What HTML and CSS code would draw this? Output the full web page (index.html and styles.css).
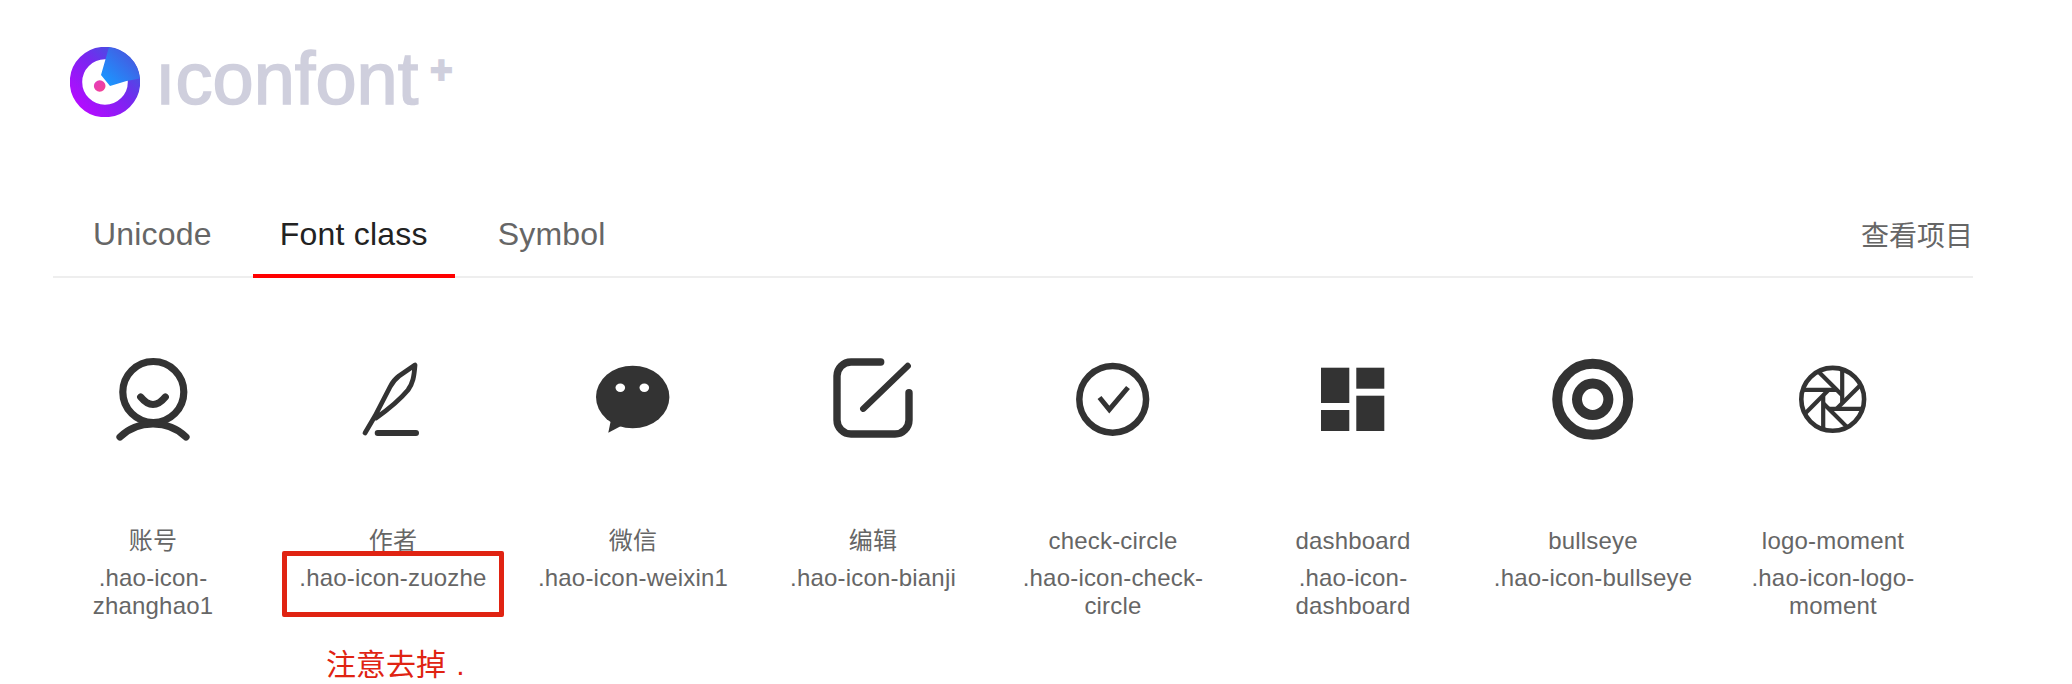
FILE: index.html
```html
<!DOCTYPE html>
<html>
<head>
    <title>iconfont Demo</title>
    <meta charset="utf-8">
    <link rel="stylesheet" href="styles.css">
</head>
<body>

<div class="main">
    <!-- Logo -->
    <h1 class="logo">
        <svg class="logo-mark" viewBox="0 0 70 70">
            <defs>
                <linearGradient id="ringFill" x1="0.1" y1="0.95" x2="0.95" y2="0.1">
                    <stop offset="0" stop-color="#b30cff"/>
                    <stop offset="0.55" stop-color="#7a26f0"/>
                    <stop offset="1" stop-color="#3c58e0"/>
                </linearGradient>
                <linearGradient id="wedgeFill" x1="0.1" y1="0.9" x2="0.9" y2="0.1">
                    <stop offset="0" stop-color="#1b96ff"/>
                    <stop offset="1" stop-color="#4c50dc"/>
                </linearGradient>
                <linearGradient id="dotFill" x1="0" y1="0" x2="1" y2="1">
                    <stop offset="0" stop-color="#e23cc0"/>
                    <stop offset="1" stop-color="#f54390"/>
                </linearGradient>
                <clipPath id="ringClip"><circle cx="35" cy="35" r="35"/></clipPath>
            </defs>
            <circle cx="35" cy="35" r="29" fill="none" stroke="url(#ringFill)" stroke-width="12.4"/>
            <polygon points="31,28 39,0 72,0 72,31 56.5,34 40,39" fill="url(#wedgeFill)" clip-path="url(#ringClip)"/>
            <circle cx="29.7" cy="39" r="5.8" fill="url(#dotFill)"/>
        </svg>
        <span class="logo-text">ıconfont</span><span class="logo-plus">+</span>
    </h1>

    <!-- Tabs -->
    <div class="nav">
        <ul class="tabs">
            <li class="tab">Unicode</li>
            <li class="tab active">Font class</li>
            <li class="tab">Symbol</li>
        </ul>
        <a class="more" href="#">查看项目</a>
    </div>

    <!-- Icon list -->
    <ul class="icon-list">
        <li class="icon-item">
            <svg class="icon" viewBox="0 0 100 100">
                <g class="line" stroke-width="7.2">
                    <circle cx="50.3" cy="43" r="30.5"/>
                    <path d="M37.7 48Q50 63 62.3 48"/>
                    <path d="M17 88C27 78 38 75 50 75C62 75 73 78 83 88"/>
                </g>
            </svg>
            <div class="name">账号</div>
            <div class="code">.hao-icon-zhanghao1</div>
        </li>
        <li class="icon-item">
            <svg class="icon" viewBox="0 0 100 100">
                <g class="line" stroke-width="4.8">
                    <path d="M22 84L32 67L47 38C50 32 52 30 56 27L72 16C71 28 70 34 65 41C60 47 50 57 33 69"/>
                </g>
                <path class="line" stroke-width="6" d="M34.7 84H73"/>
            </svg>
            <div class="name">作者</div>
            <div class="code">.hao-icon-zuozhe</div>
        </li>
        <li class="icon-item">
            <svg class="icon" viewBox="0 0 100 100">
                <ellipse class="solid" cx="49.7" cy="48" rx="36.7" ry="31.3"/>
                <polygon class="solid" points="27.7,72 25.3,83.7 38,77"/>
                <ellipse class="hole" cx="37.3" cy="38.7" rx="4.8" ry="4.2"/>
                <ellipse class="hole" cx="61.3" cy="38.7" rx="4.8" ry="4.2"/>
            </svg>
            <div class="name">微信</div>
            <div class="code">.hao-icon-weixin1</div>
        </li>
        <li class="icon-item">
            <svg class="icon" viewBox="0 0 100 100">
                <g class="line" stroke-width="7.4">
                    <path d="M57.7 13H28a14 14 0 0 0-14 14V71a14 14 0 0 0 14 14H72a14 14 0 0 0 14-14V43.7"/>
                    <path stroke-width="6.4" d="M84.7 17L40.3 59.7"/>
                </g>
            </svg>
            <div class="name">编辑</div>
            <div class="code">.hao-icon-bianji</div>
        </li>
        <li class="icon-item">
            <svg class="icon" viewBox="0 0 100 100">
                <circle class="line" stroke-width="6.5" cx="49.7" cy="50.3" r="33.4"/>
                <path class="tick" d="M36.5 48.5L46.3 60.5L65 38.5"/>
            </svg>
            <div class="name">check-circle</div>
            <div class="code">.hao-icon-check-circle</div>
        </li>
        <li class="icon-item">
            <svg class="icon" viewBox="0 0 100 100">
                <rect class="solid" x="18" y="18.7" width="28.3" height="35.3"/>
                <rect class="solid" x="53.3" y="18.7" width="28" height="21"/>
                <rect class="solid" x="18" y="61" width="28.3" height="21"/>
                <rect class="solid" x="53.3" y="46.7" width="28" height="35.3"/>
            </svg>
            <div class="name">dashboard</div>
            <div class="code">.hao-icon-dashboard</div>
        </li>
        <li class="icon-item">
            <svg class="icon" viewBox="0 0 100 100">
                <circle class="line" stroke-width="10" cx="49.7" cy="50.3" r="35.5"/>
                <circle class="line" stroke-width="10" cx="49.7" cy="50.3" r="15.7"/>
            </svg>
            <div class="name">bullseye</div>
            <div class="code">.hao-icon-bullseye</div>
        </li>
        <li class="icon-item">
            <svg class="icon" viewBox="0 0 100 100">
                <circle class="line" stroke-width="4.6" cx="49.7" cy="50.3" r="31.4"/>
                <g class="blade">
                    <path d="M19.5 40.8H53.6"/>
                    <path transform="rotate(45 49.7 50.3)" d="M19.5 40.8H53.6"/>
                    <path transform="rotate(90 49.7 50.3)" d="M19.5 40.8H53.6"/>
                    <path transform="rotate(135 49.7 50.3)" d="M19.5 40.8H53.6"/>
                    <path transform="rotate(180 49.7 50.3)" d="M19.5 40.8H53.6"/>
                    <path transform="rotate(225 49.7 50.3)" d="M19.5 40.8H53.6"/>
                    <path transform="rotate(270 49.7 50.3)" d="M19.5 40.8H53.6"/>
                    <path transform="rotate(315 49.7 50.3)" d="M19.5 40.8H53.6"/>
                </g>
            </svg>
            <div class="name">logo-moment</div>
            <div class="code">.hao-icon-logo-moment</div>
        </li>
    </ul>
</div>

<!-- Annotation drawn on top of the screenshot -->
<div class="mark-box"></div>
<div class="mark-note">注意去掉 .</div>

</body>
</html>
```

FILE: styles.css
```css
* {
    box-sizing: border-box;
}

html, body {
    margin: 0;
    height: 684px;
    overflow: hidden;
    background: #fff;
}

body {
    position: relative;
    font-family: "Liberation Sans", "Noto Sans CJK SC", sans-serif;
    color: #666;
}

ul {
    list-style: none;
    margin: 0;
    padding: 0;
}

.main {
    padding: 0 99px 0 53px;
}

/* logo */
.logo {
    display: flex;
    align-items: flex-start;
    height: 200px;
    margin: 0;
    padding: 47px 0 0 17px;
    font-weight: normal;
}

.logo-mark {
    width: 70px;
    height: 70px;
    flex: none;
}

.logo-text {
    margin: -3px 0 0 15px;
    font-size: 74px;
    line-height: 70px;
    color: #cfcfdd;
    -webkit-text-stroke: 1.6px #cfcfdd;
}

.logo-plus {
    margin: 4px 0 0 12px;
    font-size: 38px;
    line-height: 38px;
    font-weight: bold;
    color: #cfcfdd;
    -webkit-text-stroke: 2px #cfcfdd;
}

/* tabs */
.nav {
    display: flex;
    justify-content: space-between;
    height: 78px;
    border-bottom: 2px solid #eee;
}

.tabs {
    display: flex;
    padding-left: 13px;
}

.tab {
    height: 78px;
    margin-right: 16px;
    padding: 0 27px 6px;
    font-size: 32px;
    line-height: 68px;
    letter-spacing: 0.2px;
    border-bottom: 4px solid transparent;
}

.tab:first-child {
    padding-right: 25px;
}

.tab.active {
    color: #222;
    border-bottom-color: #f00;
}

.more {
    font-size: 28px;
    line-height: 74px;
    color: #666;
    text-decoration: none;
}

/* icons */
.icon-list {
    display: flex;
    gap: 40px;
    padding-top: 71px;
}

.icon-item {
    width: 200px;
    text-align: center;
    font-size: 24px;
    line-height: 28px;
    letter-spacing: 0.2px;
}

.icon {
    display: block;
    width: 100px;
    height: 100px;
    margin: 0 auto 74px;
}

.line {
    fill: none;
    stroke: #333;
    stroke-linecap: round;
    stroke-linejoin: round;
}

.solid {
    fill: #333;
}

.hole {
    fill: #fff;
}

.tick {
    fill: none;
    stroke: #333;
    stroke-width: 5;
}

.blade {
    fill: none;
    stroke: #333;
    stroke-width: 4.2;
}

.name {
    line-height: 36px;
    margin-bottom: 5px;
}

/* red annotation */
.mark-box {
    position: absolute;
    left: 282px;
    top: 551px;
    width: 222px;
    height: 66px;
    border: 5px solid #e02312;
    border-radius: 2px;
}

.mark-note {
    position: absolute;
    left: 326px;
    top: 646px;
    font-size: 30px;
    line-height: 38px;
    color: #e02312;
    white-space: pre;
    word-spacing: 2px;
}
```
